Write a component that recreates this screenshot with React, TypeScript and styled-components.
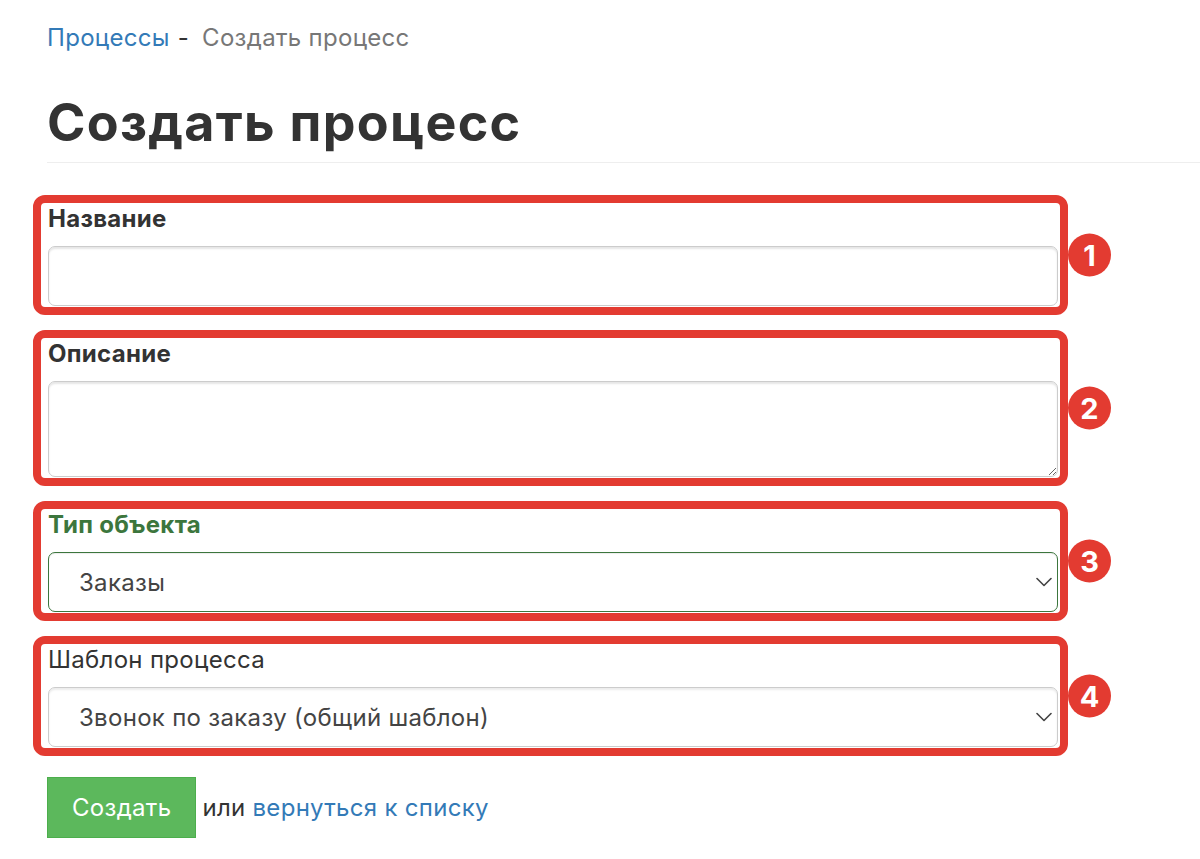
import React from "react";
import styled, { createGlobalStyle } from "styled-components";

const GlobalStyle = createGlobalStyle`
  html, body {
    margin: 0;
    padding: 0;
    background: #ffffff;
  }
  body {
    font-family: Inter, "Noto Sans", "DejaVu Sans", sans-serif;
    color: #333333;
    font-size: 24px;
    letter-spacing: 0.3px;
  }
  * { box-sizing: border-box; }
`;

const Page = styled.div`
  padding: 21px 0 0 47px;
  width: 1200px;
  min-height: 859px;
`;

const Breadcrumb = styled.div`
  display: flex;
  align-items: baseline;
  font-size: 24px;
  line-height: 34px;
`;

const Link = styled.a`
  color: #337ab7;
  text-decoration: none;
  cursor: pointer;
`;

const Separator = styled.span`
  color: #333333;
  margin: 0 13px 0 8px;
`;

const Current = styled.span`
  color: #777777;
`;

const PageHeader = styled.h1`
  margin: 40px 0 32px;
  padding: 0 0 11px;
  border-bottom: 1px solid #eeeeee;
  font-size: 52px;
  line-height: 56px;
  font-weight: 700;
  color: #333333;
  letter-spacing: 1.3px;
`;

const Form = styled.form`
  display: flex;
  flex-direction: column;
  gap: 15px;
`;

const Group = styled.div`
  position: relative;
  width: 1035px;
  margin-left: -14px;
  border: 8px solid #e33b31;
  border-radius: 12px;
  padding: 1px 2px 1px 7px;
  display: flex;
  flex-direction: column;
`;

const Badge = styled.span`
  position: absolute;
  right: -51px;
  top: 50%;
  transform: translateY(-50%);
  width: 43px;
  height: 43px;
  border-radius: 50%;
  background: #e33b31;
  color: #ffffff;
  font-size: 29px;
  font-weight: 700;
  letter-spacing: 0;
  display: flex;
  align-items: center;
  justify-content: center;
  line-height: 1;
`;

const Label = styled.label<{ $tone?: "default" | "success"; $bold?: boolean }>`
  display: block;
  font-size: 24px;
  line-height: 30px;
  margin-bottom: 12px;
  font-weight: ${(p) => (p.$bold ? 700 : 400)};
  color: ${(p) => (p.$tone === "success" ? "#3c763d" : "#333333")};
`;

const TextInput = styled.input`
  display: block;
  width: 100%;
  height: 60px;
  padding: 0 30px;
  font: inherit;
  font-size: 24px;
  color: #555555;
  background: #ffffff;
  border: 1px solid #cccccc;
  border-radius: 7px;
  box-shadow: inset 0 2px 2px rgba(0, 0, 0, 0.1);
  outline: none;
`;

const TextArea = styled.textarea`
  display: block;
  width: 100%;
  height: 96px;
  padding: 10px 30px;
  font: inherit;
  font-size: 24px;
  color: #555555;
  background: #ffffff;
  border: 1px solid #cccccc;
  border-radius: 7px;
  box-shadow: inset 0 2px 2px rgba(0, 0, 0, 0.1);
  outline: none;
  resize: vertical;
`;

const SelectWrap = styled.div`
  position: relative;
  width: 100%;
`;

const Select = styled.select<{ $tone?: "default" | "success" }>`
  display: block;
  width: 100%;
  height: 60px;
  padding: 0 40px 0 30px;
  font: inherit;
  font-size: 24px;
  letter-spacing: 0.3px;
  color: #444444;
  background: #ffffff;
  border: 1px solid ${(p) => (p.$tone === "success" ? "#3c763d" : "#cccccc")};
  border-radius: 7px;
  box-shadow: ${(p) =>
    p.$tone === "success"
      ? "inset 0 1px 1px rgba(0, 0, 0, 0.075)"
      : "inset 0 2px 2px rgba(0, 0, 0, 0.08)"};
  appearance: none;
  -webkit-appearance: none;
  outline: none;
`;

const Chevron = styled.svg`
  position: absolute;
  right: 6px;
  top: 50%;
  transform: translateY(-50%);
  pointer-events: none;
`;

const Actions = styled.div`
  display: flex;
  align-items: center;
  margin-top: 6px;
  font-size: 24px;
`;

const SubmitButton = styled.button`
  height: 61px;
  padding: 0 24px;
  font: inherit;
  font-size: 24px;
  letter-spacing: 0.3px;
  color: #ffffff;
  background: #5cb85c;
  border: 1px solid #4cae4c;
  border-radius: 0;
  cursor: pointer;
`;

const OrText = styled.span`
  margin: 0 7px 0 6px;
  color: #333333;
`;

const ChevronIcon = () => (
  <Chevron width="16" height="10" viewBox="0 0 16 10" fill="none">
    <path d="M1 1.5 L8 8.5 L15 1.5" stroke="#444" strokeWidth="1.6" strokeLinecap="round" strokeLinejoin="round" />
  </Chevron>
);

export default function App() {
  return (
    <>
      <GlobalStyle />
      <Page>
        <Breadcrumb>
          <Link>Процессы</Link>
          <Separator>-</Separator>
          <Current>Создать процесс</Current>
        </Breadcrumb>
        <PageHeader>Создать процесс</PageHeader>
        <Form onSubmit={(e) => e.preventDefault()}>
          <Group>
            <Label $bold htmlFor="name">Название</Label>
            <TextInput id="name" type="text" />
            <Badge>1</Badge>
          </Group>
          <Group>
            <Label $bold htmlFor="desc">Описание</Label>
            <TextArea id="desc" />
            <Badge>2</Badge>
          </Group>
          <Group>
            <Label $bold $tone="success" htmlFor="type">Тип объекта</Label>
            <SelectWrap>
              <Select id="type" $tone="success" defaultValue="orders">
                <option value="orders">Заказы</option>
              </Select>
              <ChevronIcon />
            </SelectWrap>
            <Badge>3</Badge>
          </Group>
          <Group>
            <Label htmlFor="tpl">Шаблон процесса</Label>
            <SelectWrap>
              <Select id="tpl" defaultValue="call">
                <option value="call">Звонок по заказу (общий шаблон)</option>
              </Select>
              <ChevronIcon />
            </SelectWrap>
            <Badge>4</Badge>
          </Group>
          <Actions>
            <SubmitButton type="submit">Создать</SubmitButton>
            <OrText>или</OrText>
            <Link>вернуться к списку</Link>
          </Actions>
        </Form>
      </Page>
    </>
  );
}
